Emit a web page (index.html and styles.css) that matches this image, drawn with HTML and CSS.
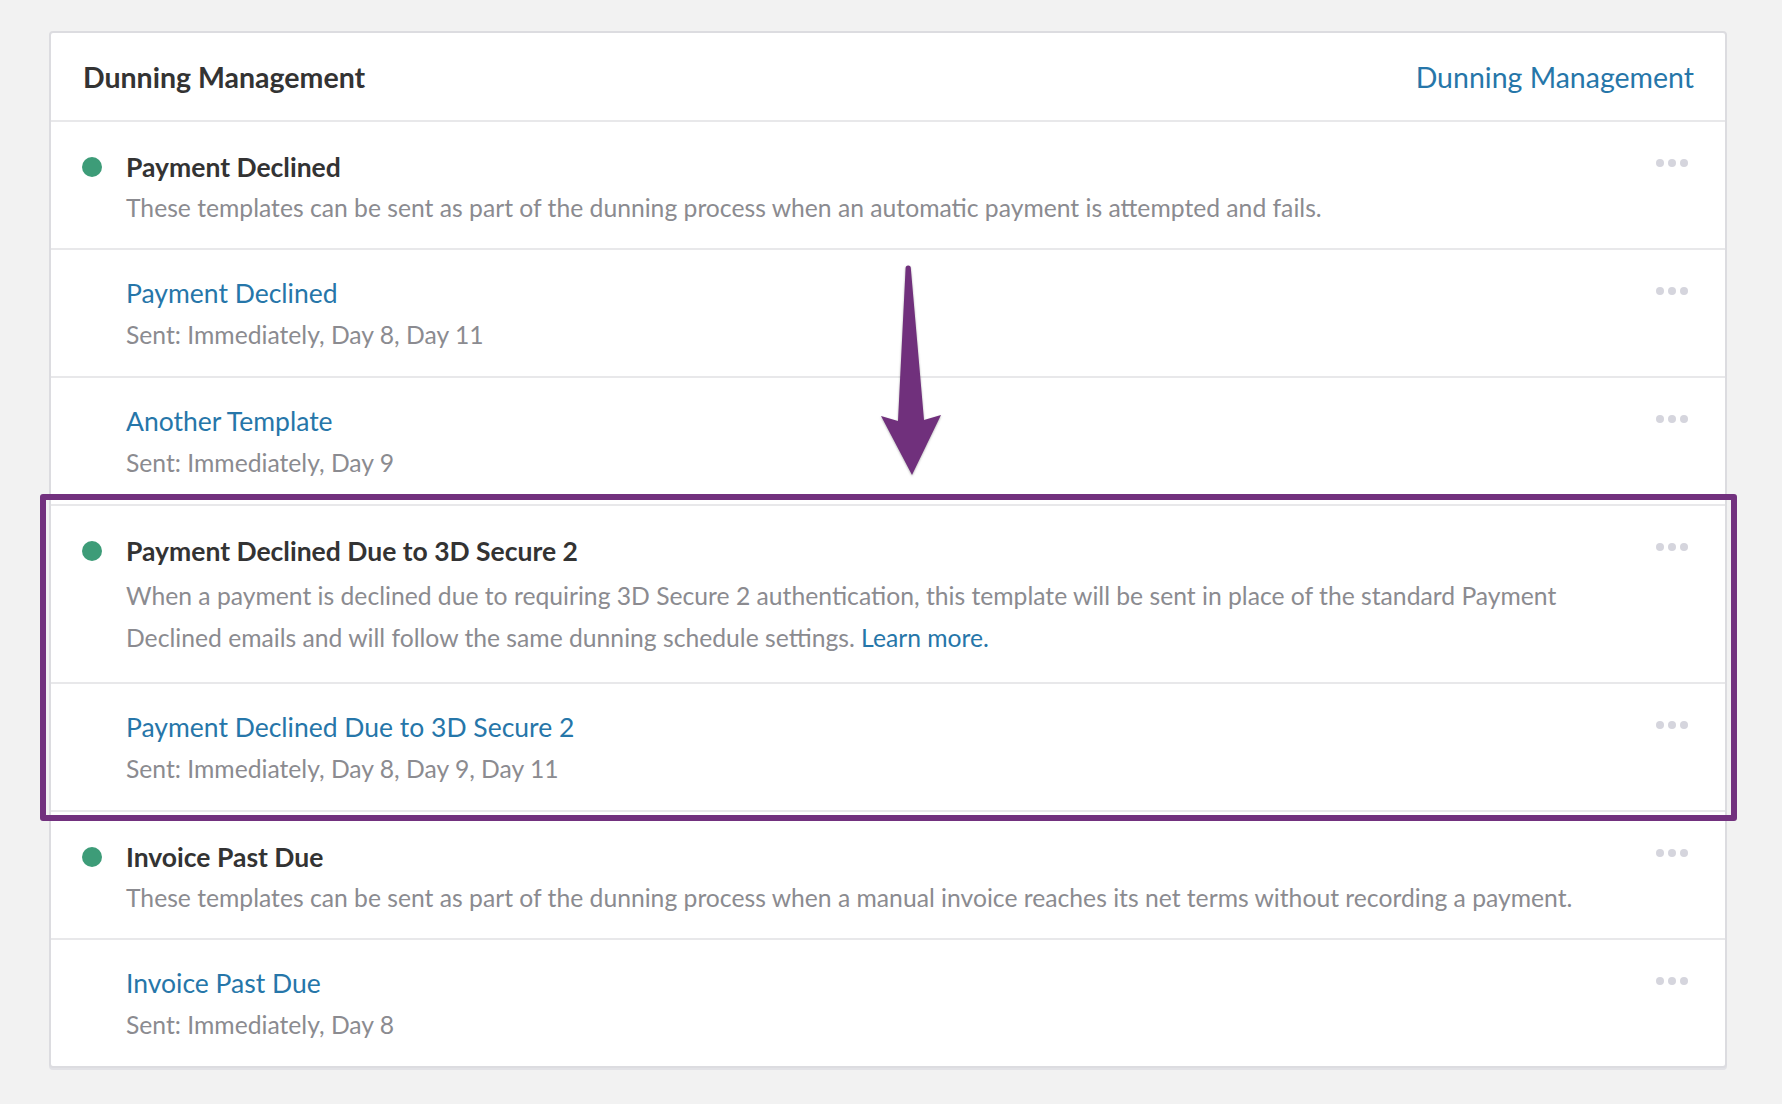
FILE: index.html
```html
<!DOCTYPE html>
<html lang="en">
<head>
    <meta charset="UTF-8">
    <meta name="viewport" content="width=device-width, initial-scale=1.0">
    <title>Dunning Management</title>
    <link rel="stylesheet" href="styles.css">
</head>
<body>
    <div class="page">
        <div class="card">
            <div class="card-header">
                <h2 class="card-title">Dunning Management</h2>
                <a class="link header-link" href="#">Dunning Management</a>
            </div>

            <div class="row">
                <span class="status"><span class="dot"></span></span>
                <div class="row-main">
                    <div class="row-title">Payment Declined</div>
                    <div class="row-desc">These templates can be sent as part of the dunning process when an automatic payment is attempted and fails.</div>
                </div>
                <span class="more"><i></i><i></i><i></i></span>
            </div>

            <div class="row row-child">
                <div class="row-main">
                    <a class="link row-link" href="#">Payment Declined</a>
                    <div class="row-desc">Sent: Immediately, Day 8, Day 11</div>
                </div>
                <span class="more"><i></i><i></i><i></i></span>
            </div>

            <div class="row row-child">
                <div class="row-main">
                    <a class="link row-link" href="#">Another Template</a>
                    <div class="row-desc">Sent: Immediately, Day 9</div>
                </div>
                <span class="more"><i></i><i></i><i></i></span>
            </div>

            <div class="row">
                <span class="status"><span class="dot"></span></span>
                <div class="row-main">
                    <div class="row-title">Payment Declined Due to 3D Secure 2</div>
                    <div class="row-desc two-line">When a payment is declined due to requiring 3D Secure 2 authentication, this template will be sent in place of the standard Payment Declined emails and will follow the same dunning schedule settings. <a class="link" href="#">Learn more.</a></div>
                </div>
                <span class="more"><i></i><i></i><i></i></span>
            </div>

            <div class="row row-child">
                <div class="row-main">
                    <a class="link row-link" href="#">Payment Declined Due to 3D Secure 2</a>
                    <div class="row-desc">Sent: Immediately, Day 8, Day 9, Day 11</div>
                </div>
                <span class="more"><i></i><i></i><i></i></span>
            </div>

            <div class="row">
                <span class="status"><span class="dot"></span></span>
                <div class="row-main">
                    <div class="row-title">Invoice Past Due</div>
                    <div class="row-desc">These templates can be sent as part of the dunning process when a manual invoice reaches its net terms without recording a payment.</div>
                </div>
                <span class="more"><i></i><i></i><i></i></span>
            </div>

            <div class="row row-child">
                <div class="row-main">
                    <a class="link row-link" href="#">Invoice Past Due</a>
                    <div class="row-desc">Sent: Immediately, Day 8</div>
                </div>
                <span class="more"><i></i><i></i><i></i></span>
            </div>
        </div>

        <!-- annotation overlay -->
        <div class="highlight"></div>
        <svg class="arrow" viewBox="0 0 80 230" xmlns="http://www.w3.org/2000/svg">
            <path d="M35.6 13 A2.6 2.6 0 0 1 40.8 13 L54 165 L71 160 L42 220 L11 161 L28 166 Z" fill="#70307c"/>
        </svg>
    </div>
</body>
</html>
```

FILE: styles.css
```css
body {
    margin: 0;
    background-color: #f2f2f2;
    font-family: Lato, "Liberation Sans", sans-serif;
    color: #333;
}

.page {
    position: relative;
    padding: 31px 0 40px 49px;
}

.card {
    width: 1678px;
    box-sizing: border-box;
    background-color: #fff;
    border: 2px solid #dcdce0;
    border-radius: 4px;
    box-shadow: 0 2px 0 #e2e2e6;
}

.card-header {
    display: flex;
    justify-content: space-between;
    align-items: center;
    height: 87px;
    padding: 0 31px 0 32px;
    border-bottom: 2px solid #e8e8ea;
}

.card-title {
    margin: 0;
    font-size: 28.5px;
    font-weight: 700;
    color: #333;
}

.link {
    color: #2676a9;
    text-decoration: none;
}

.header-link {
    font-size: 28.5px;
}

.row {
    display: flex;
    align-items: flex-start;
    padding: 27px 37px 19px 31px;
    border-bottom: 2px solid #e8e8ea;
}

.row:last-child {
    border-bottom: none;
}

.row-child {
    padding-left: 75px;
}

.status {
    flex: none;
    display: flex;
    align-items: center;
    width: 20px;
    height: 36px;
    margin-right: 24px;
}

.dot {
    width: 20px;
    height: 20px;
    border-radius: 50%;
    background-color: #3d9c78;
}

.row-main {
    flex: 1;
}

.row-title {
    font-size: 26.5px;
    font-weight: 700;
    line-height: 36px;
    color: #333;
}

.row-link {
    display: block;
    margin-top: -2px;
    font-size: 26.5px;
    line-height: 36px;
}

.row-desc {
    margin-top: 2px;
    font-size: 24.7px;
    line-height: 42px;
    color: #8b8b90;
}

.row-link + .row-desc {
    margin-top: 3px;
    margin-bottom: 1px;
}

.row-desc.two-line {
    margin-top: 6px;
    margin-bottom: 4px;
}

.more {
    flex: none;
    display: flex;
    gap: 4px;
    margin: 10px 0 0 16px;
}

.more i {
    width: 8px;
    height: 8px;
    border-radius: 50%;
    background-color: #d5d5dd;
}

.highlight {
    position: absolute;
    left: 40px;
    top: 494px;
    width: 1697px;
    height: 327px;
    box-sizing: border-box;
    border: 6px solid #72317e;
    border-radius: 3px;
    pointer-events: none;
}

.arrow {
    position: absolute;
    left: 870px;
    top: 255px;
    width: 80px;
    height: 230px;
    filter: drop-shadow(0 1px 1px rgba(0, 0, 0, 0.3));
}
```
